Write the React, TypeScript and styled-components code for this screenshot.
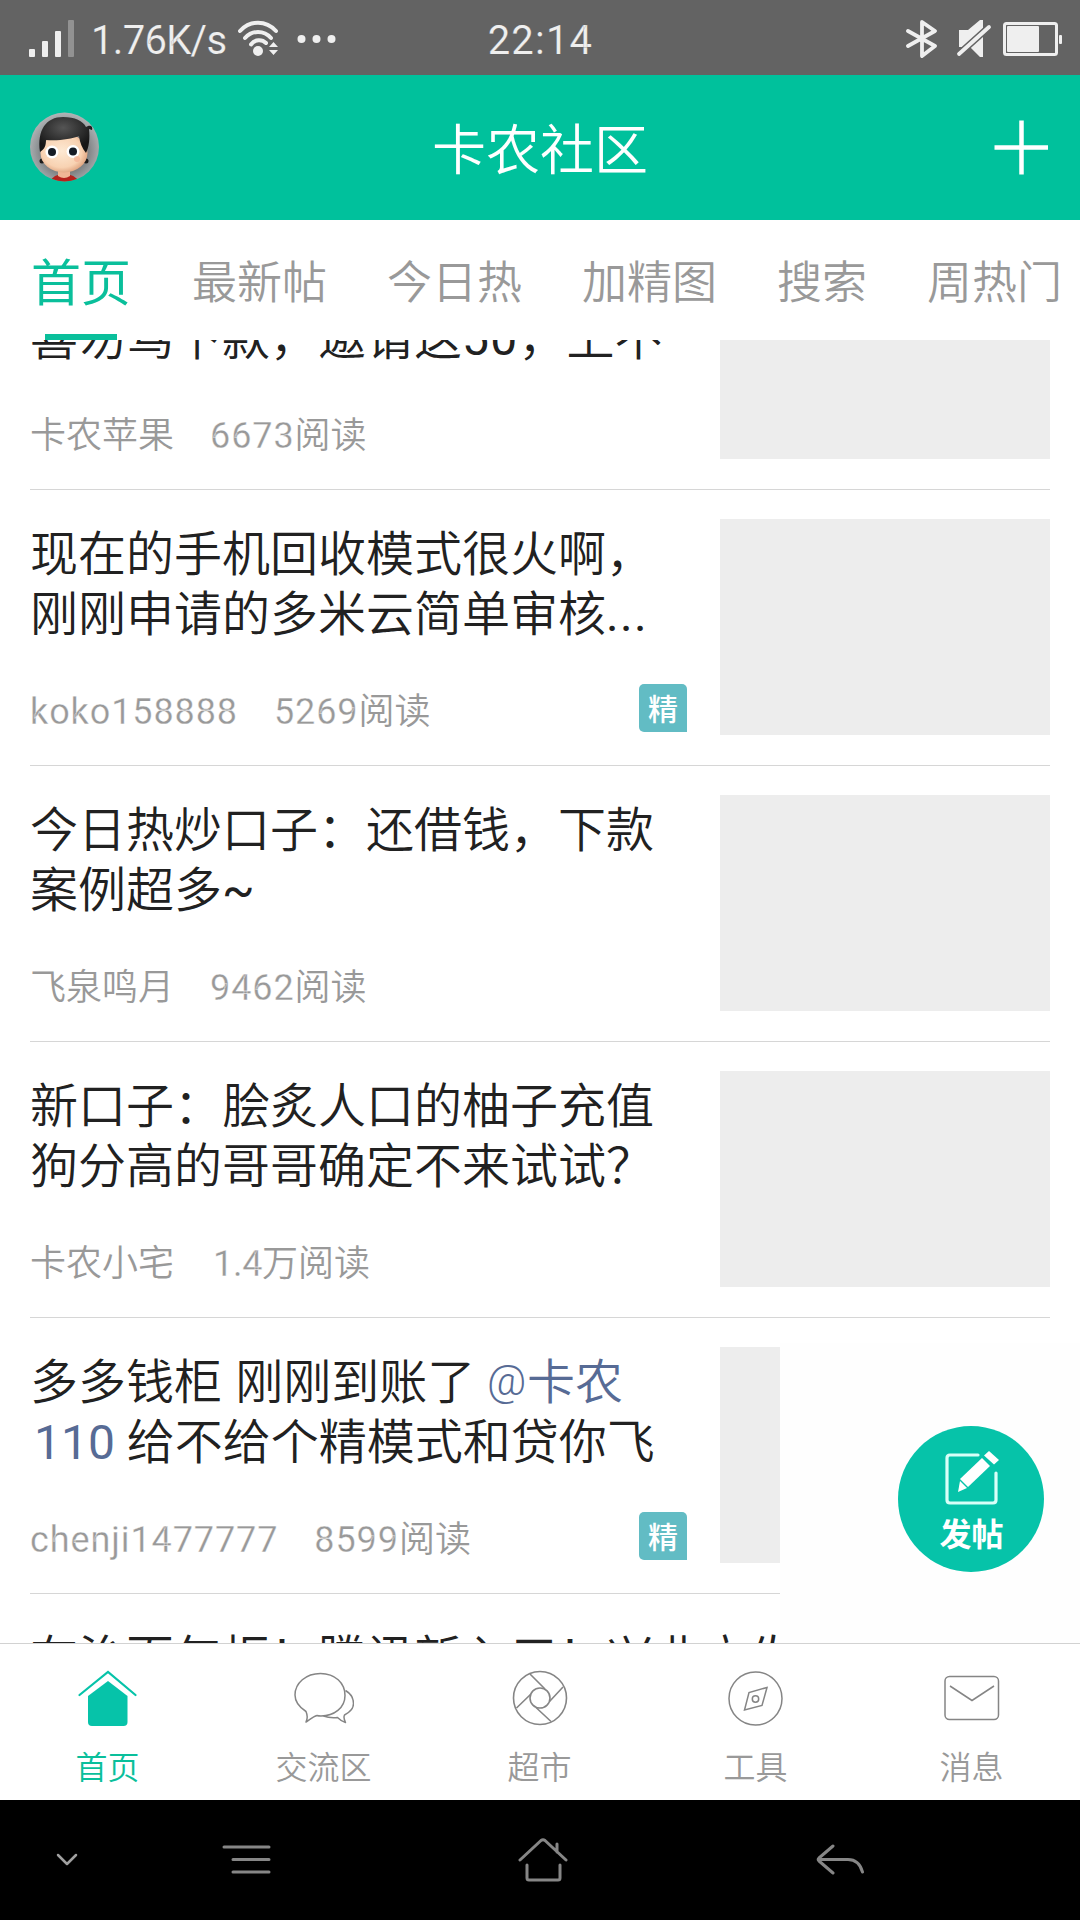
import React from 'react';
import styled, { createGlobalStyle } from 'styled-components';

const GlobalStyle = createGlobalStyle`
  * { box-sizing: border-box; }
  body {
    margin: 0;
    background: #fff;
    font-family: Roboto, "Noto Sans CJK SC", sans-serif;
    font-weight: 350;
    color: #212121;
  }
  svg { display: block; flex: none; }
`;

const Screen = styled.div`
  width: 1080px;
  height: 1920px;
  display: flex;
  flex-direction: column;
  overflow: hidden;
  background: #fff;
`;

const StatusBar = styled.div`
  height: 75px;
  flex: none;
  display: grid;
  grid-template-columns: 1fr auto 1fr;
  align-items: center;
  padding: 0 18px 0 29px;
  background: #636363;
  color: #efefef;
  font-size: 40px;
  font-weight: 400;
  line-height: 75px;
`;

const StatusGroup = styled.div<{ $end?: boolean }>`
  display: flex;
  align-items: center;
  justify-content: ${p => (p.$end ? 'flex-end' : 'flex-start')};
`;

const Speed = styled.span`
  width: 136px;
  margin: 2px 10px 0 16px;
  letter-spacing: -0.7px;
  -webkit-text-stroke: 0.2px #636363;
`;

const Clock = styled.span`
  margin: 3px 10px 0 0;
  letter-spacing: 1.2px;
  -webkit-text-stroke: 0.2px #636363;
`;

const Header = styled.header`
  height: 145px;
  flex: none;
  display: grid;
  grid-template-columns: 70px 1fr 70px;
  align-items: center;
  padding: 0 30px 2px;
  background: #00c19c;
  color: #fff;
`;

const HeaderTitle = styled.h1`
  margin: 0;
  padding-top: 11px;
  text-align: center;
  font-size: 54px;
  font-weight: 350;
  line-height: 80px;
`;

const AddButton = styled.div`
  display: flex;
  justify-content: flex-end;
`;

const Tabs = styled.nav`
  height: 120px;
  flex: none;
  display: flex;
  gap: 60px;
  padding-left: 30px;
  overflow: hidden;
`;

const Tab = styled.div<{ $active?: boolean }>`
  position: relative;
  flex: none;
  width: ${p => (p.$active ? '102px' : 'auto')};
  text-align: center;
  white-space: nowrap;
  font-size: ${p => (p.$active ? '50px' : '45px')};
  font-weight: ${p => (p.$active ? 400 : 350)};
  line-height: 128px;
  height: 120px;
  color: ${p => (p.$active ? '#0abf9b' : '#999')};
`;

const TabLine = styled.div`
  position: absolute;
  left: 15px;
  right: 15px;
  bottom: 0;
  height: 6px;
  background: #0abf9b;
`;

const Viewport = styled.main`
  position: relative;
  height: 1303px;
  flex: none;
  overflow: hidden;
`;

const Feed = styled.div`
  margin-top: -126px;
  padding: 0 30px;
`;

const Row = styled.article`
  height: 276px;
  display: flex;
  justify-content: space-between;
  padding: 29px 0 30px;
  border-bottom: 1px solid #d6d6d6;
`;

const RowBody = styled.div`
  width: 657px;
  display: flex;
  flex-direction: column;
  justify-content: space-between;
`;

const Title = styled.h2`
  margin: 0;
  padding-top: 6px;
  font-size: 48px;
  font-weight: 350;
  line-height: 60px;
`;

const Line = styled.div`
  height: 60px;
  white-space: pre;
`;

const Latin = styled.span`
  font-weight: 400;
  letter-spacing: 1.3px;
`;

const Mention = styled.span`
  color: #576b95;
`;

const MentionNumber = styled(Mention)`
  display: inline-block;
  width: 85px;
  padding-left: 4px;
  font-weight: 400;
`;

const AtSign = styled.span`
  display: inline-block;
  width: 40px;
  height: 40px;
  line-height: 36px;
  font-size: 43px;
  transform: translateY(-4px);
`;

const Meta = styled.div`
  height: 48px;
  margin-bottom: 3px;
  display: flex;
  align-items: center;
  gap: 36px;
  color: #999;
  font-size: 36px;
  line-height: 48px;
  white-space: nowrap;
`;

const MetaText = styled.span<{ $indent?: boolean }>`
  margin-top: 8px;
  padding-left: ${p => (p.$indent ? '3px' : '0')};
`;

const Digits = styled.span<{ $tight?: boolean }>`
  font-weight: 400;
  letter-spacing: ${p => (p.$tight ? '-0.3px' : '0.9px')};
  -webkit-text-stroke: 0.3px #fff;
`;

const Badge = styled.span`
  width: 48px;
  height: 48px;
  margin-left: auto;
  border-radius: 5px 5px 0 5px;
  background: #62bcc4;
  color: #fff;
  font-size: 30px;
  font-weight: 500;
  line-height: 51px;
  text-align: center;
`;

const Thumb = styled.div`
  width: 330px;
  height: 216px;
  background: #ededed;
`;

const PostPanel = styled.div`
  position: absolute;
  right: 0;
  bottom: 0;
  width: 300px;
  height: 300px;
  padding: 83px 0 0 117.5px;
  background: #fefefe;
`;

const PostButton = styled.div`
  width: 146px;
  height: 146px;
  border-radius: 50%;
  display: flex;
  flex-direction: column;
  align-items: center;
  padding: 23px 0 0 2px;
  background: #06c3a9;
  color: #fff;
`;

const PostLabel = styled.span`
  font-size: 32px;
  font-weight: 700;
  line-height: 34px;
  margin-top: 13px;
`;

const TabBar = styled.nav`
  height: 157px;
  flex: none;
  display: grid;
  grid-template-columns: repeat(5, 1fr);
  border-top: 1px solid #d2d2d2;
  background: #fff;
`;

const TabItem = styled.div<{ $active?: boolean }>`
  display: flex;
  flex-direction: column;
  align-items: center;
  padding-top: 24px;
  font-size: 32px;
  line-height: 40px;
  color: ${p => (p.$active ? '#0abf9b' : '#999')};
`;

const TabLabel = styled.span`
  margin: 20px 1px 0 0;
`;

const SystemNav = styled.div`
  height: 120px;
  flex: none;
  background: #000;
  color: #868686;
  display: grid;
  grid-template-columns: 133px 228px 363px 232px 1fr;
  align-items: center;
  justify-items: center;
`;

const SignalIcon = () => (
  <svg width="46" height="42" viewBox="0 0 46 42">
    <g fill="#efefef">
      <rect x="0" y="31" width="6" height="8" rx="1" />
      <rect x="13" y="23" width="6" height="16" rx="1" />
      <rect x="26" y="13" width="6" height="26" rx="1" />
      <rect x="39" y="2" width="6" height="37" rx="1" fill="#929292" />
    </g>
  </svg>
);

const WifiIcon = () => (
  <svg width="44" height="38" viewBox="0 0 44 38" fill="none" stroke="#efefef" strokeWidth="4" strokeLinecap="round">
    <path d="M3 11C13 0 29 0 39 11M8 18C15 10 27 10 34 18M14 24.500C18 19 25 19 29 23" />
    <circle cx="21" cy="31" r="5" fill="#efefef" stroke="none" />
    <path d="M32 27l4.500-5 4.500 5zM32 30l4.500 5 4.500-5z" fill="#efefef" stroke="none" />
  </svg>
);

const DotsIcon = () => (
  <svg width="40" height="12" viewBox="0 0 40 12" fill="#efefef">
    <circle cx="4.500" cy="6" r="4" />
    <circle cx="19.500" cy="6" r="4" />
    <circle cx="34.500" cy="6" r="4" />
  </svg>
);

const BluetoothIcon = () => (
  <svg width="33" height="42" viewBox="0 0 33 42" fill="none" stroke="#efefef" strokeWidth="3.800" strokeLinejoin="round" strokeLinecap="round">
    <path d="M2 13l27 15-13 10V4l13 9L2 28" />
  </svg>
);

const MuteIcon = () => (
  <svg width="36" height="42" viewBox="0 0 36 42">
    <path d="M3 12h9L24 2h3v37h-3L14 29H3z" fill="#efefef" />
    <path d="M3 36L33 9" stroke="#636363" strokeWidth="7" />
    <path d="M3 36L33 9" stroke="#efefef" strokeWidth="3.800" strokeLinecap="round" />
  </svg>
);

const BatteryIcon = () => (
  <svg width="59" height="36" viewBox="0 0 59 36">
    <rect x="1.500" y="2.500" width="52" height="31" rx="2" fill="none" stroke="#efefef" strokeWidth="3" />
    <rect x="4" y="5" width="32" height="26" rx="1" fill="#efefef" />
    <rect x="56" y="14" width="3" height="9" rx="1" fill="#efefef" />
  </svg>
);

const Avatar = () => (
  <svg width="70" height="70" viewBox="0 0 70 70">
    <defs>
      <radialGradient id="halo" cx="50%" cy="55%" r="55%">
        <stop offset="0.5" stopColor="#707476" />
        <stop offset="0.8" stopColor="#9a9ea0" />
        <stop offset="1" stopColor="#b3b7b9" />
      </radialGradient>
      <radialGradient id="skin" cx="45%" cy="45%" r="60%">
        <stop offset="0" stopColor="#fde9d3" />
        <stop offset="0.7" stopColor="#f8d2b2" />
        <stop offset="1" stopColor="#dc9d78" />
      </radialGradient>
      <radialGradient id="hair" cx="45%" cy="30%" r="60%">
        <stop offset="0" stopColor="#555" />
        <stop offset="1" stopColor="#161616" />
      </radialGradient>
      <clipPath id="disc"><circle cx="34.500" cy="35" r="34.500" /></clipPath>
    </defs>
    <g clipPath="url(#disc)">
      <rect width="70" height="70" fill="url(#halo)" />
      <path d="M20 70q3-8 14-8t15 8z" fill="#b5221c" />
      <path d="M28 58h12v6q-6 4-12 0z" fill="#f0b695" />
      <circle cx="12" cy="49" r="2.500" fill="#1b1b1b" />
      <circle cx="56" cy="49" r="2.500" fill="#1b1b1b" />
      <ellipse cx="34" cy="41" rx="23.500" ry="19.500" fill="url(#skin)" />
      <path d="M10 40C7 18 16 5 33 5c12 0 20 4 23 10 5-3 7 0 6 3l-3-1c1 9 0 18-3 24-4-5-6-10-7-17-8 3-20 5-33 4 0 5-1 9-6 12z" fill="url(#hair)" />
      <circle cx="22" cy="40" r="6.500" fill="#fff" />
      <circle cx="43" cy="39.500" r="6.500" fill="#fff" />
      <circle cx="22" cy="40" r="4" fill="#141c26" />
      <circle cx="43" cy="39.500" r="4" fill="#141c26" />
      <circle cx="47" cy="47" r="3" fill="#f2ab90" opacity="0.6" />
    </g>
  </svg>
);

const PlusIcon = () => (
  <svg width="56" height="56" viewBox="0 0 56 56" stroke="#fff" strokeWidth="4.500">
    <path d="M0.500 28.500H54M27.500 1.500V55.500" />
  </svg>
);

const ComposeIcon = () => (
  <svg width="56" height="56" viewBox="0 0 56 56">
    <path d="M34 6H6q-3 0-3 3v42q0 3 3 3h43q3 0 3-3V24" fill="none" stroke="#d8fff8" strokeWidth="3.200" strokeLinecap="round" />
    <path d="M38 9l8 8-22 21-8-8z" fill="#fff" />
    <path d="M40 6.500L45 2l10 9-5 4.500z" fill="#fff" />
    <path d="M16 32l7 7-9 4z" fill="#fff" />
  </svg>
);

const HomeIcon = () => (
  <svg width="60" height="60" viewBox="0 0 60 60">
    <path d="M1.500 27L30 4l27.500 23" fill="none" stroke="#06c3a9" strokeWidth="2.200" strokeLinecap="round" />
    <path d="M30 13l19.500 15v26q0 4-4 4H14q-4 0-4-4V28z" fill="#06c3a9" />
  </svg>
);

const ChatIcon = () => (
  <svg width="60" height="60" viewBox="0 0 60 60" fill="none" stroke="#858585" strokeWidth="1.500" strokeLinejoin="round">
    <path d="M12 43.500C5 39 1 34 1 27 1 15 12 5.500 26.500 5.500S51 15 51 27.500 40 48 27 48c-2 0-3-.2-4-.5-4 1-7 4-11 6.500 2-4 1.500-7 0-10.500z" />
    <path d="M51.500 22.500c5 3 8 8 8 13 0 5-4 9-9 11.500-1 2-.5 4.500 1 7.500-4-1-6-3-8-5-5 .5-10 0-14-1.500" />
  </svg>
);

const ShutterIcon = () => (
  <svg width="60" height="60" viewBox="0 0 60 60" fill="none" stroke="#858585" strokeWidth="1.600">
    <circle cx="30" cy="30" r="26.500" />
    <circle cx="30" cy="30" r="10" />
    <path d="M20 6L35 21M53 19L39.500 33.500M41 53.500L26 39.500M6.500 40L20.500 26.500" />
  </svg>
);

const CompassIcon = () => (
  <svg width="60" height="60" viewBox="0 0 60 60" fill="none" stroke="#858585" strokeWidth="1.500">
    <circle cx="29.500" cy="30.500" r="26.500" />
    <path d="M41 19.500l-18 5-4.500 17.500L36 37.500z" />
    <circle cx="29.500" cy="31" r="3.200" />
  </svg>
);

const MailIcon = () => (
  <svg width="60" height="60" viewBox="0 0 60 60" fill="none" stroke="#858585" strokeWidth="1.500">
    <rect x="3" y="8.500" width="53.500" height="43" rx="4.500" />
    <path d="M8 18l22 14.500L52 18" />
  </svg>
);

const sys = { fill: 'none', stroke: 'currentColor', strokeWidth: 3, strokeLinecap: 'round' as const, strokeLinejoin: 'round' as const };

const DownIcon = () => (
  <svg width="22" height="14" viewBox="0 0 22 14" {...sys} stroke="#a0a0a0" strokeWidth="2.500"><path d="M2 2l9 9 9-9" /></svg>
);
const MenuIcon = () => (
  <svg width="50" height="32" viewBox="0 0 50 32" {...sys}><path d="M2 3H47M11 15.500H47M11 28H47" /></svg>
);
const SystemHomeIcon = () => (
  <svg width="50" height="46" viewBox="0 0 50 46" {...sys}>
    <path d="M2 23L23 3.500q2-1.500 4 0L48 23M39 7v8M9 28v13q0 2 2 2H40q2 0 2-2V28" />
  </svg>
);
const BackIcon = () => (
  <svg width="48" height="32" viewBox="0 0 48 32" {...sys}>
    <path d="M17 2L3 14q-1.500 1.500 0 3L17 29M3 15.500H32q11 0 14.500 12.500" />
  </svg>
);

type Post = {
  lines: React.ReactNode[];
  author: React.ReactNode;
  reads: string;
  unit?: string;
  star?: boolean;
};

const posts: Post[] = [
  { lines: ['', <>喜勿骂下款，邀请这<Latin>50</Latin>，上不</>], author: '卡农苹果', reads: '6673' },
  { lines: ['现在的手机回收模式很火啊，', <>刚刚申请的多米云简单审核<Latin>...</Latin></>], author: <Digits>koko158888</Digits>, reads: '5269', star: true },
  { lines: ['今日热炒口子：还借钱，下款', <>案例超多<Latin>~</Latin></>], author: '飞泉鸣月', reads: '9462' },
  { lines: ['新口子：脍炙人口的柚子充值', '狗分高的哥哥确定不来试试？'], author: '卡农小宅', reads: '1.4', unit: '万' },
  {
    lines: [
      <>多多钱柜<Latin> </Latin>刚刚到账了 <Mention><AtSign>@</AtSign>卡农</Mention></>,
      <><MentionNumber>110</MentionNumber> 给不给个精模式和贷你飞</>,
    ],
    author: <Digits>chenji1477777</Digits>,
    reads: '8599',
    star: true,
  },
  { lines: ['在治百年柜！腾讯新入口！兴业立发'], author: '', reads: '' },
];

const tabs = ['首页', '最新帖', '今日热', '加精图', '搜索', '周热门'];

const bottomTabs = [
  { label: '首页', Icon: HomeIcon },
  { label: '交流区', Icon: ChatIcon },
  { label: '超市', Icon: ShutterIcon },
  { label: '工具', Icon: CompassIcon },
  { label: '消息', Icon: MailIcon },
];

const Spacer = styled.i<{ $w: number }>`
  flex: none;
  width: ${p => p.$w}px;
`;

export default function App() {
  return (
    <Screen lang="zh-CN">
      <GlobalStyle />
      <StatusBar>
        <StatusGroup>
          <SignalIcon />
          <Speed>1.76K/s</Speed>
          <WifiIcon />
          <Spacer $w={16} />
          <DotsIcon />
        </StatusGroup>
        <Clock>22:14</Clock>
        <StatusGroup $end>
          <BluetoothIcon />
          <Spacer $w={17} />
          <MuteIcon />
          <Spacer $w={11} />
          <BatteryIcon />
        </StatusGroup>
      </StatusBar>
      <Header>
        <Avatar />
        <HeaderTitle>卡农社区</HeaderTitle>
        <AddButton><PlusIcon /></AddButton>
      </Header>
      <Tabs>
        {tabs.map((t, i) => (
          <Tab key={t} $active={i === 0}>
            {t}
            {i === 0 && <TabLine />}
          </Tab>
        ))}
      </Tabs>
      <Viewport>
        <Feed>
          {posts.map((p, i) => (
            <Row key={i}>
              <RowBody>
                <Title>{p.lines.map((l, j) => <Line key={j}>{l}</Line>)}</Title>
                {p.reads && (
                  <Meta>
                    <MetaText>{p.author}</MetaText>
                    <MetaText $indent={!!p.unit}><Digits $tight={!!p.unit}>{p.reads}</Digits>{p.unit}阅读</MetaText>
                    {p.star && <Badge>精</Badge>}
                  </Meta>
                )}
              </RowBody>
              {p.reads && <Thumb />}
            </Row>
          ))}
        </Feed>
        <PostPanel>
          <PostButton>
            <ComposeIcon />
            <PostLabel>发帖</PostLabel>
          </PostButton>
        </PostPanel>
      </Viewport>
      <TabBar>
        {bottomTabs.map(({ label, Icon }, i) => (
          <TabItem key={label} $active={i === 0}>
            <Icon />
            <TabLabel>{label}</TabLabel>
          </TabItem>
        ))}
      </TabBar>
      <SystemNav>
        <DownIcon />
        <MenuIcon />
        <SystemHomeIcon />
        <BackIcon />
      </SystemNav>
    </Screen>
  );
}
